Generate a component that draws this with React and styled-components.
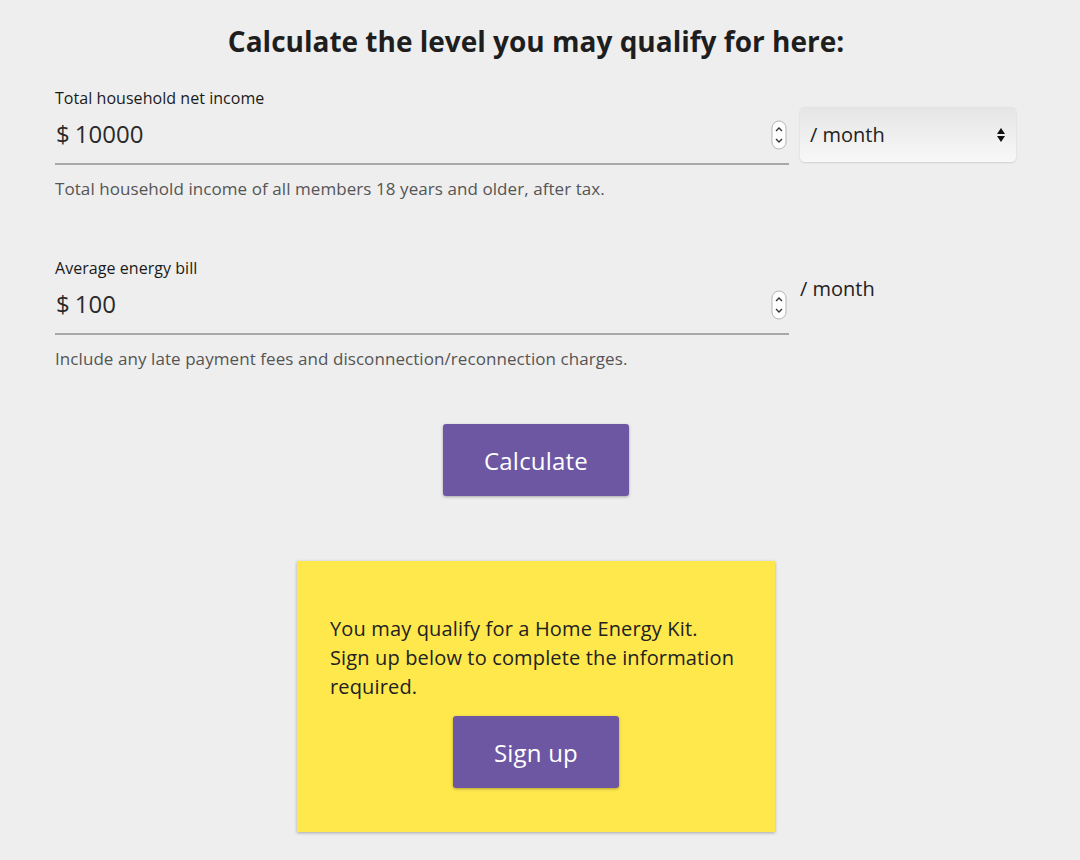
import React from "react";
import styled, { createGlobalStyle } from "styled-components";

const Global = createGlobalStyle`
  html, body { margin: 0; padding: 0; background: #eeeeee; }
  body { font-family: "Open Sans", "Liberation Sans", sans-serif; color: #222; }
`;

const Page = styled.div`
  width: 962px;
  padding: 22px 0 40px 55px;
  display: flex;
  flex-direction: column;
`;

const Title = styled.h1`
  margin: 0 0 28px;
  font-size: 28px;
  line-height: 38px;
  font-weight: 700;
  text-align: center;
  color: #1e1e1e;
`;

const FieldRow = styled.div`
  display: flex;
  align-items: flex-start;
  gap: 11px;
  margin-bottom: ${(p) => p.$gap || 0}px;
`;

const Field = styled.div`
  flex: 0 0 734px;
  display: flex;
  flex-direction: column;
`;

const Label = styled.div`
  font-size: 16px;
  line-height: 20px;
  letter-spacing: 0.05px;
  color: #1a1a1a;
`;

const ValueRow = styled.div`
  position: relative;
  margin-top: 10px;
  padding: 0 0 13px 1px;
  font-size: 24px;
  line-height: 32px;
  color: #2a2a2a;
  border-bottom: 2px solid #a8a8a8;
`;

const Currency = styled.span`
  margin-right: 5px;
`;

const Spin = styled.svg`
  position: absolute;
  right: 2px;
  top: 2px;
`;

const Helper = styled.div`
  margin-top: 13px;
  font-size: 17px;
  line-height: 22px;
  letter-spacing: 0.07px;
  color: #555;
`;

const Select = styled.div`
  flex: 0 0 216px;
  box-sizing: border-box;
  height: 55px;
  margin-top: 19px;
  padding: 0 10px;
  display: flex;
  align-items: center;
  justify-content: space-between;
  border-radius: 5px;
  background: linear-gradient(#e5e5e5, #f8f8f8);
  box-shadow: 0 1px 2px rgba(0, 0, 0, 0.12), 0 0 1px rgba(0, 0, 0, 0.1);
  font-size: 20px;
  color: #222;
`;

const UnitText = styled.div`
  margin-top: 17px;
  font-size: 20px;
  line-height: 28px;
  color: #222;
`;

const Button = styled.button`
  align-self: center;
  width: ${(p) => p.$w}px;
  height: 72px;
  border: none;
  border-radius: 3px;
  background: #6d57a3;
  color: #fff;
  font-family: "Open Sans", "Liberation Sans", sans-serif;
  font-size: 24px;
  letter-spacing: 0.2px;
  box-shadow: 0 1px 3px rgba(0, 0, 0, 0.3);
  cursor: pointer;
`;

const ResultBox = styled.div`
  align-self: center;
  margin-top: 65px;
  width: 478px;
  height: 271px;
  box-sizing: border-box;
  padding: 53px 33px 0;
  background: #fee84c;
  box-shadow: 0 1px 3px rgba(0, 0, 0, 0.3);
  display: flex;
  flex-direction: column;
`;

const ResultText = styled.p`
  margin: 0 0 15px;
  font-size: 20px;
  line-height: 29px;
  letter-spacing: 0.15px;
  color: #222;
  white-space: nowrap;
`;

const SpinnerIcon = () => (
  <Spin width="16" height="30" viewBox="0 0 16 30">
    <rect x="1" y="1" width="14" height="28" rx="7" fill="#fff" stroke="#b5b5b5" />
    <path d="M5 11 L8 8 L11 11" fill="none" stroke="#333" strokeWidth="1.4" />
    <path d="M5 19 L8 22 L11 19" fill="none" stroke="#333" strokeWidth="1.4" />
  </Spin>
);

const SelectArrows = () => (
  <svg width="10" height="16" viewBox="0 0 10 16">
    <path d="M5 1 L9 7 L1 7 Z" fill="#111" />
    <path d="M1 9 L9 9 L5 15 Z" fill="#111" />
  </svg>
);

export default function App() {
  return (
    <>
      <Global />
      <Page>
        <Title>Calculate the level you may qualify for here:</Title>

        <FieldRow $gap={58}>
          <Field>
            <Label>Total household net income</Label>
            <ValueRow>
              <Currency>$</Currency>10000
              <SpinnerIcon />
            </ValueRow>
            <Helper>Total household income of all members 18 years and older, after tax.</Helper>
          </Field>
          <Select>
            <span>/ month</span>
            <SelectArrows />
          </Select>
        </FieldRow>

        <FieldRow $gap={54}>
          <Field>
            <Label>Average energy bill</Label>
            <ValueRow>
              <Currency>$</Currency>100
              <SpinnerIcon />
            </ValueRow>
            <Helper>Include any late payment fees and disconnection/reconnection charges.</Helper>
          </Field>
          <UnitText>/ month</UnitText>
        </FieldRow>

        <Button $w={186}>Calculate</Button>

        <ResultBox>
          <ResultText>
            You may qualify for a Home Energy Kit.
            <br />
            Sign up below to complete the information
            <br />
            required.
          </ResultText>
          <Button $w={166}>Sign up</Button>
        </ResultBox>
      </Page>
    </>
  );
}
